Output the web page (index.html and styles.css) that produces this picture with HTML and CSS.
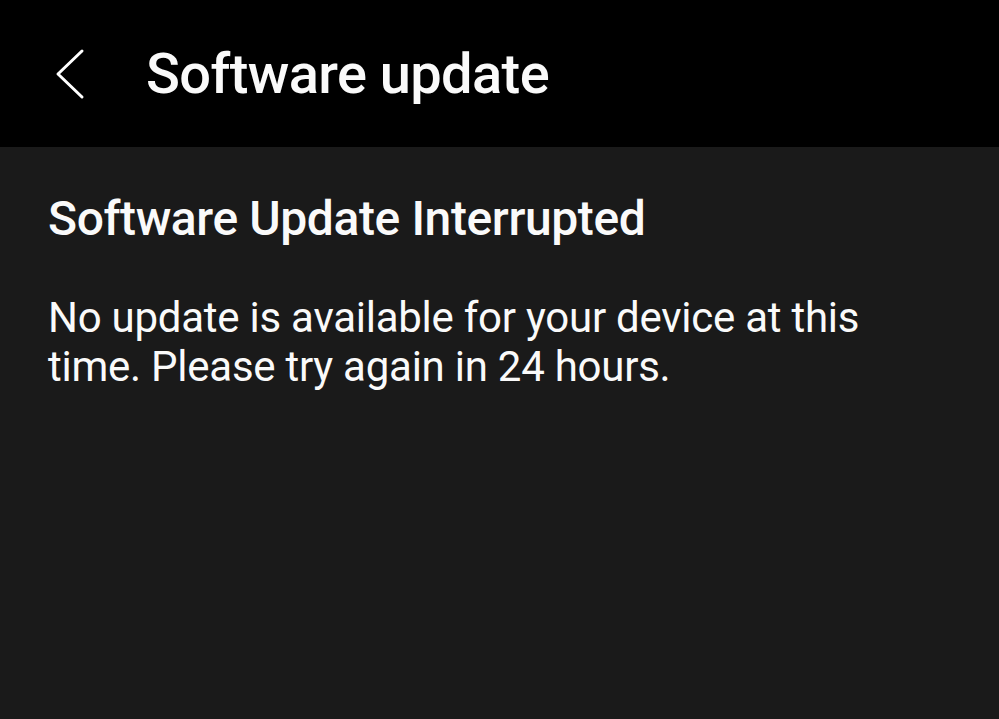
FILE: index.html
```html
<!DOCTYPE html>
<html lang="en">
<head>
    <meta charset="UTF-8">
    <meta name="viewport" content="width=device-width, initial-scale=1.0">
    <title>Software update</title>
    <link rel="stylesheet" href="styles.css">
</head>
<body>
    <header class="app-bar">
        <button class="back-btn" aria-label="Back">
            <svg width="32" height="52" viewBox="0 0 32 52">
                <path d="M28 3 L4 26 L28 49" fill="none" stroke="#fff" stroke-width="3" stroke-linecap="round" stroke-linejoin="round"/>
            </svg>
        </button>
        <h1 class="app-title">Software update</h1>
    </header>

    <main class="content">
        <h2 class="status-title">Software Update Interrupted</h2>
        <p class="status-text">No update is available for your device at this time. Please try again in 24 hours.</p>
    </main>
</body>
</html>
```

FILE: styles.css
```css
* {
    margin: 0;
    padding: 0;
    box-sizing: border-box;
}

html, body {
    height: 100%;
}

body {
    font-family: Roboto, "Noto Sans", sans-serif;
    background: #1a1a1a;
    color: #fafafa;
    overflow: hidden;
}

.app-bar {
    background: #000;
    height: 147px;
    display: flex;
    align-items: center;
    padding-left: 54px;
    gap: 60px;
}

.back-btn {
    background: none;
    border: none;
    display: flex;
    align-items: center;
    cursor: pointer;
}

.app-title {
    font-size: 56px;
    font-weight: 500;
    letter-spacing: -0.6px;
}

.content {
    padding: 44px 48px 0;
}

.status-title {
    font-size: 48px;
    font-weight: 500;
    letter-spacing: -0.4px;
    line-height: 56px;
    margin-bottom: 46px;
}

.status-text {
    font-size: 42px;
    font-weight: 400;
    line-height: 49px;
    max-width: 840px;
    letter-spacing: -0.25px;
}
```
